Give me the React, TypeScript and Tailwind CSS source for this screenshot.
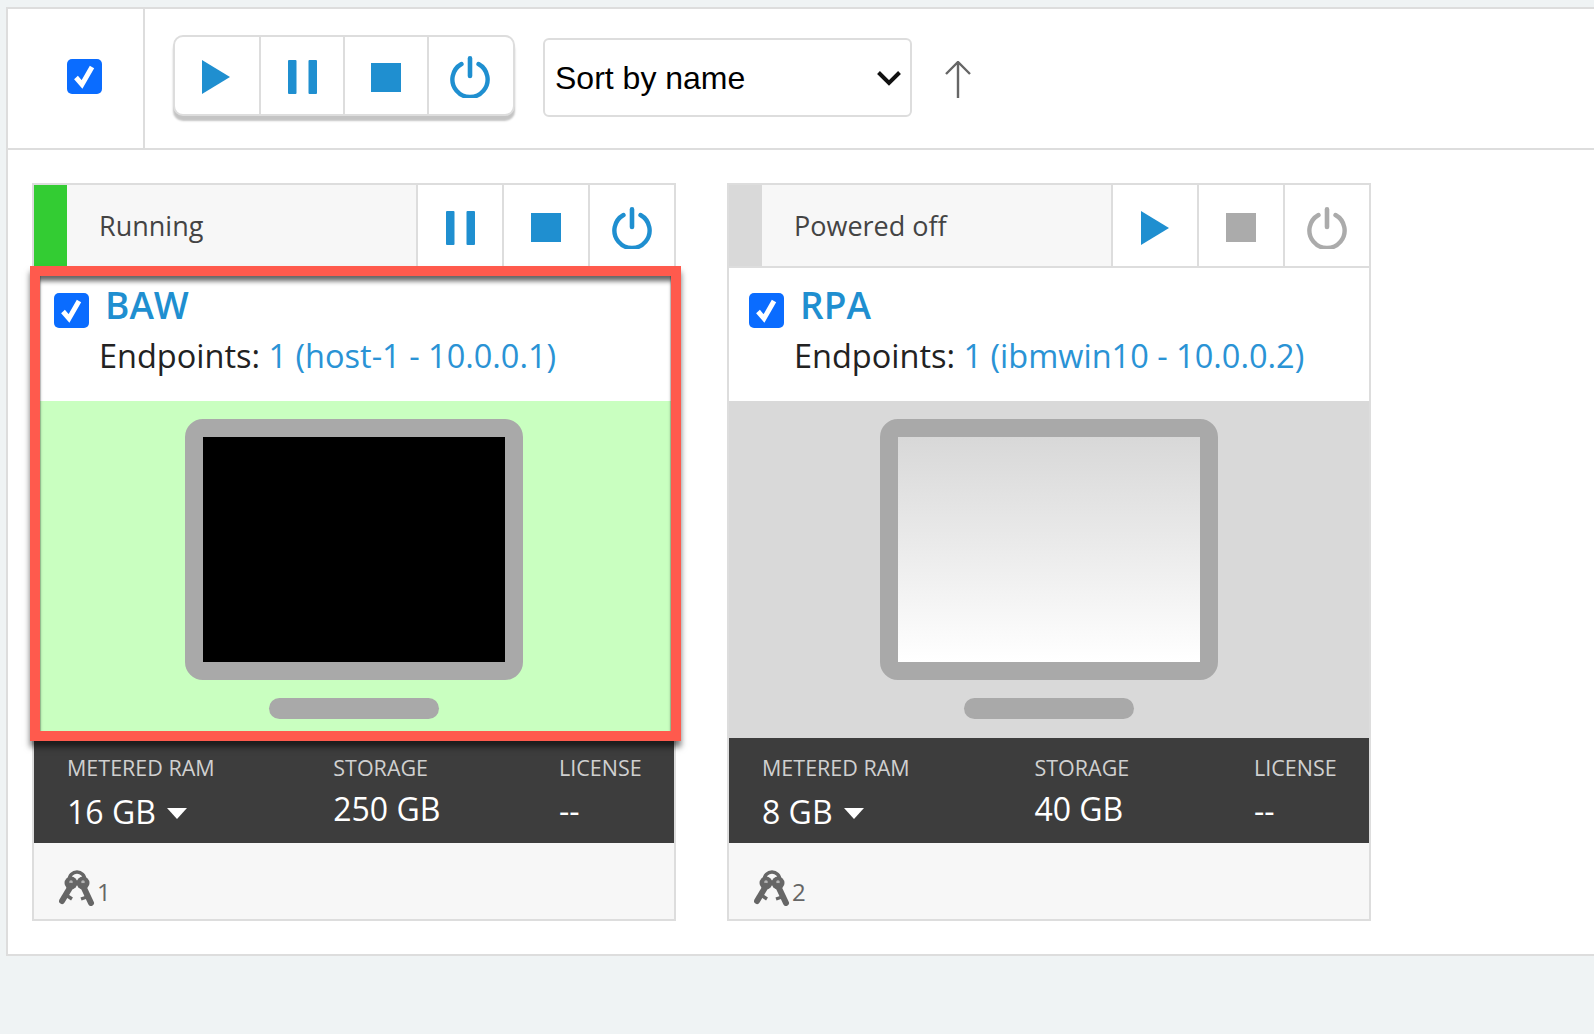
import React from "react";

const BLUE = "#1f8fd0";
const GREY = "#ababab";

function Check() {
  return (
    <div className="w-[35px] h-[35px] rounded-[5px] bg-[#0a6cff] flex items-center justify-center shrink-0">
      <svg width="27" height="27" viewBox="0 0 27 27" fill="none">
        <path d="M5 14.5 L11 21.5 L21 4" stroke="#fff" strokeWidth="5" />
      </svg>
    </div>
  );
}

function Play({ color = BLUE }: { color?: string }) {
  return (
    <svg width="28" height="34" viewBox="0 0 28 34">
      <path d="M0 0 L28 17 L0 34 Z" fill={color} />
    </svg>
  );
}
function Pause({ color = BLUE }: { color?: string }) {
  return (
    <svg width="29" height="34" viewBox="0 0 29 34">
      <rect x="0" y="0" width="8.5" height="34" rx="1" fill={color} />
      <rect x="20.5" y="0" width="8.5" height="34" rx="1" fill={color} />
    </svg>
  );
}
function Stop({ color = BLUE }: { color?: string }) {
  return (
    <svg width="30" height="29" viewBox="0 0 30 29">
      <rect width="30" height="29" fill={color} />
    </svg>
  );
}
function Power({ color = BLUE }: { color?: string }) {
  return (
    <svg width="42" height="42" viewBox="0 0 42 42" fill="none">
      <path d="M12.5 9 A17.6 17.6 0 1 0 29.5 9" stroke={color} strokeWidth="4.4" strokeLinecap="round" transform="translate(0 -1)" />
      <path d="M21 2.4 V20" stroke={color} strokeWidth="4.6" strokeLinecap="round" />
    </svg>
  );
}

function Keys() {
  return (
    <svg width="36" height="38" viewBox="0 0 36 38" fill="none">
      <path d="M10 13 C10 1 26 1 26 13" stroke="#666666" strokeWidth="3.4" />
      <circle cx="12" cy="15" r="6.5" fill="#666666" />
      <circle cx="24" cy="15" r="6.5" fill="#666666" />
      <circle cx="12" cy="14" r="1.8" fill="#b5b5b5" />
      <circle cx="24" cy="14" r="1.8" fill="#b5b5b5" />
      <path d="M12 18 L3 33" stroke="#666666" strokeWidth="6" strokeLinecap="round" />
      <path d="M24 18 L32 35" stroke="#666666" strokeWidth="6" strokeLinecap="round" />
      <path d="M7 27 L13 31 M28 29 L22 31" stroke="#666666" strokeWidth="3.4" />
    </svg>
  );
}

type CardProps = {
  status: string;
  stripe: string;
  name: string;
  endpoints: string;
  ram: string;
  storage: string;
  keyCount: string;
  running: boolean;
};

function Card({ status, stripe, name, endpoints, ram, storage, keyCount, running }: CardProps) {
  return (
    <div className="relative w-[644px] h-[738px] border-2 border-[#dddddd] flex flex-col shrink-0 bg-white">
      <div className="h-[83px] flex bg-[#f7f7f7] border-b-2 border-[#dddddd] shrink-0">
        <div className="w-[33px]" style={{ background: stripe }} />
        <div className="flex-1 pl-[32px] flex items-center text-[27px] text-[#444444] pt-[1px]">{status}</div>
        <div className="w-[86px] bg-white border-l-2 border-[#dddddd] flex items-center justify-center pt-[4px]">
          {running ? <Pause /> : <Play />}
        </div>
        <div className="w-[86px] bg-white border-l-2 border-[#dddddd] flex items-center justify-center pt-[4px]">
          <Stop color={running ? BLUE : GREY} />
        </div>
        <div className="w-[86px] bg-white border-l-2 border-[#dddddd] flex items-center justify-center pt-[4px]">
          <Power color={running ? BLUE : GREY} />
        </div>
      </div>
      <div className="h-[133px] shrink-0 bg-white pl-[20px] pt-[14px]">
        <div className="flex items-start gap-[16px] h-[52px]">
          <div className="pt-[11px]">
            <Check />
          </div>
          <div className="text-[37px] leading-[46px] font-semibold text-[#1f8fd0]">{name}</div>
        </div>
        <div className="pl-[45px] text-[32.5px] leading-[44px] text-[#222222]">
          Endpoints: <span className="text-[#2a93d5]">{endpoints}</span>
        </div>
      </div>
      <div className={`h-[337px] shrink-0 flex flex-col items-center pt-[18px] ${running ? "bg-[#c9ffc0]" : "bg-[#d9d9d9]"}`}>
        <div
          className={`w-[338px] h-[261px] border-[18px] border-[#a9a9a9] rounded-[18px] ${
            running ? "bg-black" : "bg-gradient-to-b from-[#d8d8d8] to-white"
          }`}
        />
        <div className="w-[170px] h-[21px] mt-[18px] rounded-full bg-[#a9a9a9]" />
      </div>
      <div className="h-[105px] shrink-0 bg-[#3d3d3d] pl-[33px] pr-[33px] pt-[16px] flex justify-between text-white">
        <div>
          <div className="text-[21.5px] leading-[28px] text-[#d0d0d0]">METERED RAM</div>
          <div className="mt-[11px] text-[32px] leading-[38px] flex items-center gap-[11px]">
            {ram}
            <svg width="20" height="11" viewBox="0 0 20 11" className="mt-[2px]">
              <path d="M0 0 H20 L10 11 Z" fill="#fff" />
            </svg>
          </div>
        </div>
        <div>
          <div className="text-[21.5px] leading-[28px] text-[#d0d0d0]">STORAGE</div>
          <div className="mt-[8px] text-[32px] leading-[38px]">{storage}</div>
        </div>
        <div className="w-[82px]">
          <div className="text-[21.5px] leading-[28px] text-[#d0d0d0]">LICENSE</div>
          <div className="mt-[10px] text-[32px] leading-[38px]">--</div>
        </div>
      </div>
      <div className="flex-1 bg-[#f7f7f7] pl-[25px] pt-[25px] flex items-start">
        <Keys />
        <span className="text-[24px] leading-[30px] mt-[9px] ml-[2px] text-[#666666]">{keyCount}</span>
      </div>
      {running && (
        <div className="absolute left-[-4px] right-[-7px] top-[81px] bottom-[178px] border-[10px] border-[#ff5a4d] shadow-[0_6px_6px_rgba(0,0,0,0.55),inset_0_7px_5px_-2px_rgba(0,0,0,0.6),inset_2px_0_1px_-1px_rgba(0,0,0,0.2),inset_-2px_0_1px_-1px_rgba(0,0,0,0.2)] pointer-events-none" />
      )}
    </div>
  );
}

export default function App() {
  return (
    <div className="min-h-[1034px] w-full bg-[#eff3f4] pl-[6px] pt-[7px] overflow-hidden font-['Open_Sans',sans-serif]">
      <div className="h-[949px] border-2 border-r-0 border-[#dddddd] bg-white">
        <div className="h-[141px] flex items-stretch border-b-2 border-[#dddddd]">
          <div className="w-[137px] border-r-2 border-[#dddddd] flex items-center justify-center pl-[17px] pb-[4px]">
            <Check />
          </div>
          <div className="flex items-start pt-[26px] pl-[28px]">
            <div className="flex w-[342px] h-[81px] bg-white border-2 border-[#dddddd] rounded-[10px] shadow-[0_5px_2px_#c4c4c4]">
              <div className="flex-1 flex items-center justify-center pt-[3px] pr-[2px] border-r-2 border-[#dddddd]"><Play /></div>
              <div className="flex-1 flex items-center justify-center pt-[3px] border-r-2 border-[#dddddd]"><Pause /></div>
              <div className="flex-1 flex items-center justify-center pt-[3px] border-r-2 border-[#dddddd]"><Stop /></div>
              <div className="flex-1 flex items-center justify-center pt-[3px] pr-[2px]"><Power /></div>
            </div>
            <div className="relative ml-[28px] mt-[3px]">
              <select
                defaultValue="name"
                className="appearance-none w-[369px] h-[79px] bg-white border-2 border-[#dddddd] rounded-[6px] pl-[10px] pr-[40px] text-[32px] text-black font-['Liberation_Sans',sans-serif]"
              >
                <option value="name">Sort by name</option>
              </select>
              <svg width="26" height="16" viewBox="0 0 26 16" fill="none" className="absolute right-[10px] top-[32px] pointer-events-none">
                <path d="M2.5 2.5 L13 13 L23.5 2.5" stroke="#111111" strokeWidth="4" />
              </svg>
            </div>
            <svg width="30" height="38" viewBox="0 0 30 38" fill="none" className="ml-[31px] mt-[26px]">
              <path d="M15 1 V37 M3 13 L15 1 L27 13" stroke="#666666" strokeWidth="2.4" />
            </svg>
          </div>
        </div>
        <div className="flex gap-[51px] pl-[24px] pt-[33px]">
          <Card
            status="Running"
            stripe="#33cc33"
            name="BAW"
            endpoints="1 (host-1 - 10.0.0.1)"
            ram="16 GB"
            storage="250 GB"
            keyCount="1"
            running
          />
          <Card
            status="Powered off"
            stripe="#d9d9d9"
            name="RPA"
            endpoints="1 (ibmwin10 - 10.0.0.2)"
            ram="8 GB"
            storage="40 GB"
            keyCount="2"
            running={false}
          />
        </div>
      </div>
    </div>
  );
}
